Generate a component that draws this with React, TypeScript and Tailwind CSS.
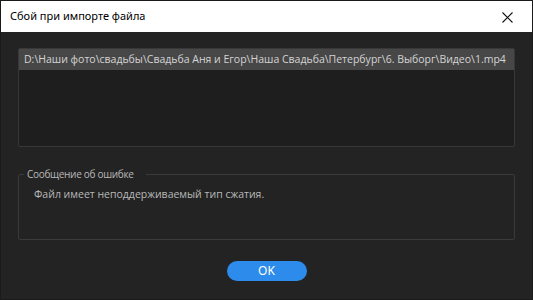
export default function App() {
  const path =
    'D:\\Наши фото\\свадьбы\\Свадьба Аня и Егор\\Наша Свадьба\\Петербург\\6. Выборг\\Видео\\1.mp4'
  return (
    <div className="w-[533px] h-[300px] bg-[#1a1a1a] p-px">
      <div className="flex h-[298px] flex-col bg-[#232323]">
        <div className="flex h-[31px] shrink-0 items-center justify-between bg-white pl-[9px] pr-[19px] font-['Noto_Sans',sans-serif] text-[11px] text-black">
          <span>Сбой при импорте файла</span>
          <svg width="11" height="11" viewBox="0 0 11 11" className="mt-px">
            <path d="M0.5 0.5 L10.5 10.5 M10.5 0.5 L0.5 10.5" stroke="#111" strokeWidth="1.1" />
          </svg>
        </div>

        <div className="flex flex-col px-[17px] font-['Open_Sans',sans-serif] text-[10.5px]">
          <div className="mt-[16px] h-[99px] rounded-[2px] border border-[#383838] bg-[#1e1e1e]">
            <div className="flex h-[21px] items-center bg-[#474747] px-[5px] text-[#d4d4d4] whitespace-nowrap">
              {path}
            </div>
          </div>

          <fieldset className="mt-[20px] h-[73px] rounded-[2px] border border-[#3a3a3a] px-[5px]">
            <legend className="pl-[3px] pr-[12px] text-[10px] leading-[14px] tracking-[-0.3px] text-[#b8b8b8]">
              Сообщение об ошибке
            </legend>
            <div className="mt-[6px] pl-[10px] leading-[14px] text-[#b8b8b8]">
              Файл имеет неподдерживаемый тип сжатия.
            </div>
          </fieldset>

          <div className="mt-[21px] flex justify-center">
            <button className="h-[20px] w-[80px] rounded-full bg-[#2d8ceb] font-['Noto_Sans',sans-serif] text-[12px] leading-none text-white">
              OK
            </button>
          </div>
        </div>
      </div>
    </div>
  )
}
